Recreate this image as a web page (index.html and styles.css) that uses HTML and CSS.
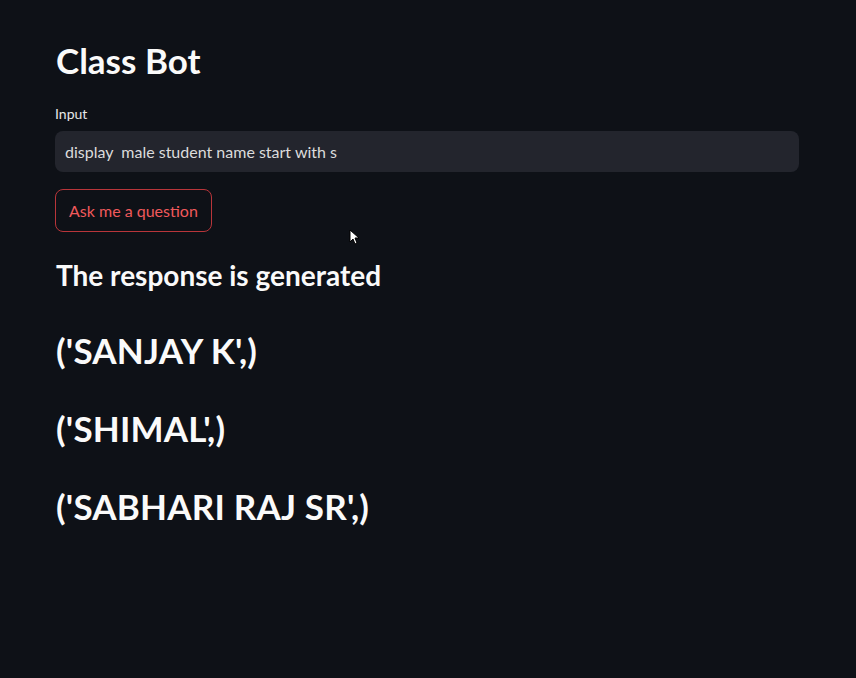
FILE: index.html
```html
<!DOCTYPE html>
<html>
<head>
<meta charset="utf-8">
<link rel="stylesheet" href="styles.css">
</head>
<body>
<main class="app">
  <h1 class="title">Class Bot</h1>
  <label class="label">Input</label>
  <div class="input">display&nbsp; male student name start with s</div>
  <div class="btn-row"><button class="btn">Ask me a question</button></div>
  <h3 class="sub">The response is generated</h3>
  <h2 class="result">('SANJAY K',)</h2>
  <h2 class="result">('SHIMAL',)</h2>
  <h2 class="result">('SABHARI RAJ SR',)</h2>
</main>
<svg class="cursor" width="10" height="16" viewBox="0 0 10 16"><path d="M1 1 L1 13 L4 10 L6 15 L8 14 L6 9 L10 9 Z" fill="#fff" stroke="#000" stroke-width="1"/></svg>
</body>
</html>
```
FILE: styles.css
```css
html, body { margin: 0; padding: 0; }
body {
  background: #0e1117;
  width: 856px;
  height: 678px;
  overflow: hidden;
  font-family: "Lato", "Noto Sans", sans-serif;
  color: #fafafa;
  position: relative;
}
.app {
  padding: 37px 57px 0 55px;
  display: flex;
  flex-direction: column;
}
.title {
  margin: 0 0 0 1px;
  font-size: 35px;
  font-weight: 700;
  line-height: 46px;
  letter-spacing: 0;
}
.label {
  margin-top: 23px;
  font-size: 14px;
  line-height: 16px;
  color: #e8e8e8;
}
.input {
  margin-top: 9px;
  height: 41px;
  box-sizing: border-box;
  background: #23252d;
  border-radius: 8px;
  padding: 0 10px;
  display: flex;
  align-items: center;
  font-size: 16px;
  color: #dcdcdc;
}
.btn-row { margin-top: 17px; display: flex; }
.btn {
  background: transparent;
  border: 1px solid #b8353a;
  border-radius: 8px;
  padding: 0 13px;
  height: 43px;
  color: #f0595c;
  font-family: inherit;
  font-size: 16px;
}
.sub {
  margin: 26px 0 0 1px;
  font-size: 28px;
  line-height: 34px;
  font-weight: 700;
}
.result {
  margin: 38px 0 0 1px;
  font-size: 35px;
  line-height: 40px;
  font-weight: 700;
  letter-spacing: 0.2px;
}
.cursor { position: absolute; left: 349px; top: 229px; }
```
